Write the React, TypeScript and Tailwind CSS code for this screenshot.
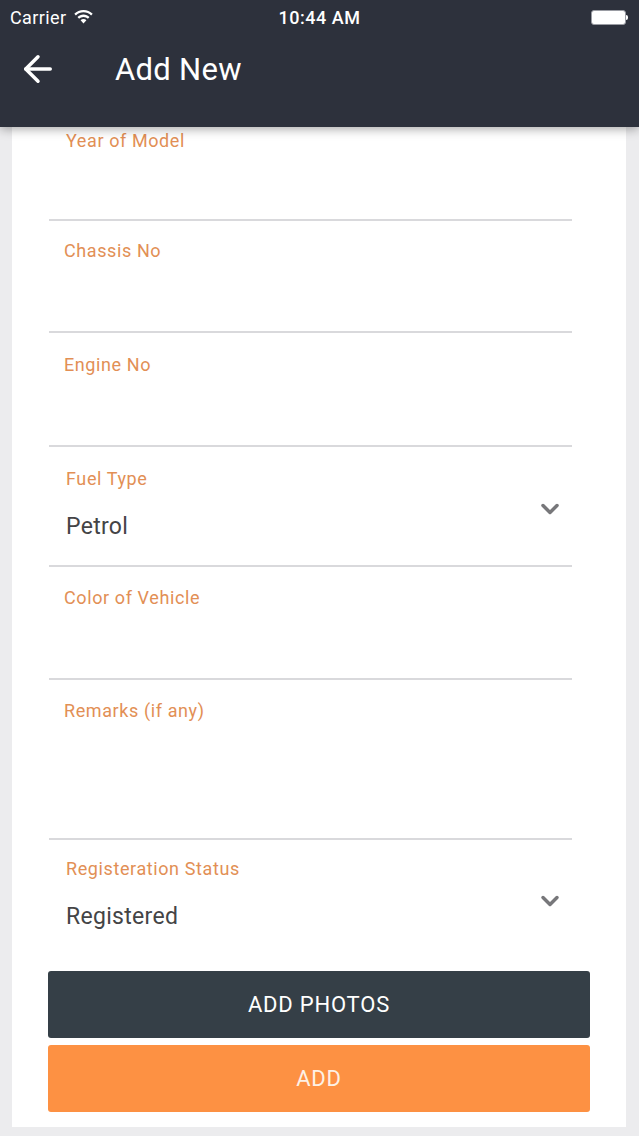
import { ArrowLeft, ChevronDown } from 'lucide-react';

type Field = {
  label: string;
  height: string;
  pad: string;
  labelIndent: string;
  value?: string;
};

const fields: Field[] = [
  { label: 'Year of Model', height: 'h-[94px]', pad: 'pt-[4px]', labelIndent: 'pl-[17px]' },
  { label: 'Chassis No', height: 'h-[112px]', pad: 'pt-[20px]', labelIndent: 'pl-[15px]' },
  { label: 'Engine No', height: 'h-[114px]', pad: 'pt-[22px]', labelIndent: 'pl-[15px]' },
  { label: 'Fuel Type', height: 'h-[120px]', pad: 'pt-[22px]', labelIndent: 'pl-[17px]', value: 'Petrol' },
  { label: 'Color of Vehicle', height: 'h-[113px]', pad: 'pt-[21px]', labelIndent: 'pl-[15px]' },
  { label: 'Remarks (if any)', height: 'h-[160px]', pad: 'pt-[21px]', labelIndent: 'pl-[15px]' },
];

const StatusBar = () => (
  <div className="h-[34px] flex items-center justify-between px-[10px] text-white text-[18px] relative">
    <div className="flex items-center gap-[7px]">
      <span className="tracking-[0.4px]">Carrier</span>
      <svg width="19" height="14" viewBox="0 0 19 14" fill="white">
        <path d="M9.5 0C5.9 0 2.7 1.4 0.3 3.7l1.6 1.7C3.9 3.5 6.6 2.3 9.5 2.3s5.6 1.2 7.6 3.1l1.6-1.7C16.3 1.4 13.1 0 9.5 0z" />
        <path d="M9.5 4.6c-2.3 0-4.4 0.9-6 2.4l1.6 1.7c1.2-1.1 2.7-1.8 4.4-1.8s3.2 0.7 4.4 1.8l1.6-1.7c-1.6-1.5-3.7-2.4-6-2.4z" />
        <path d="M9.5 9.1c-1.1 0-2.1 0.4-2.9 1.1L9.5 13.4l2.9-3.2c-0.8-0.7-1.8-1.1-2.9-1.1z" />
      </svg>
    </div>
    <span className="absolute left-1/2 -translate-x-1/2 font-medium tracking-[0.5px]">10:44 AM</span>
    <div className="flex items-center pr-[1px]">
      <div className="w-[35px] h-[15px] bg-white rounded-[3px] border border-[#9a9ca3]" />
      <div className="w-[2px] h-[5px] bg-white rounded-r-sm" />
    </div>
  </div>
);

const FieldRow = ({ f }: { f: Field }) => (
  <div className={`${f.height} ${f.pad} ml-[37px] mr-[54px] border-b-2 border-[#d9d9dc] relative`}>
    <div className={`${f.labelIndent} text-[18px] leading-[20px] tracking-[0.6px] text-[#e28f55]`}>{f.label}</div>
    {f.value && (
      <>
        <div className={`${f.labelIndent} mt-[24px] text-[23px] leading-[28px] tracking-[0.3px] text-[#444446]`}>
          {f.value}
        </div>
        <ChevronDown
          className="absolute right-[8px] top-[48px] text-[#77777a]"
          size={28}
          strokeWidth={3}
        />
      </>
    )}
  </div>
);

export default function App() {
  return (
    <div
      className="w-[639px] h-[1136px] bg-[#ececee] flex flex-col overflow-hidden"
      style={{ fontFamily: 'Roboto, "Liberation Sans", sans-serif' }}
    >
      <div className="bg-[#2d313c] h-[127px] shrink-0 relative z-10 shadow-[0_2px_10px_rgba(0,0,0,0.35)]">
        <StatusBar />
        <div className="flex items-center h-[70px]">
          <ArrowLeft className="ml-[17px] text-white" size={42} strokeWidth={2} />
          <span className="ml-[56px] text-white text-[31px] leading-none tracking-[0.3px]">Add New</span>
        </div>
      </div>

      <div className="mx-[12px] w-[614px] bg-white h-[1000px] shrink-0">
        {fields.map((f) => (
          <FieldRow key={f.label} f={f} />
        ))}
        <div className="ml-[37px] mr-[54px] h-[131px] pt-[19px] relative">
          <div className="pl-[17px] text-[18px] leading-[20px] tracking-[0.6px] text-[#e28f55]">Registeration Status</div>
          <div className="pl-[17px] mt-[24px] text-[23px] leading-[28px] tracking-[0.3px] text-[#444446]">Registered</div>
          <ChevronDown
            className="absolute right-[8px] top-[47px] text-[#77777a]"
            size={28}
            strokeWidth={3}
          />
        </div>
        <div className="ml-[36px] mr-[36px] flex flex-col gap-[7px]">
          <button className="h-[67px] rounded-[3px] bg-[#353f47] text-white text-[22px] tracking-[0.8px]">ADD PHOTOS</button>
          <button className="h-[67px] rounded-[3px] bg-[#fd9143] text-[#fdf1e6] text-[22px] tracking-[0.8px]">ADD</button>
        </div>
      </div>
    </div>
  );
}
